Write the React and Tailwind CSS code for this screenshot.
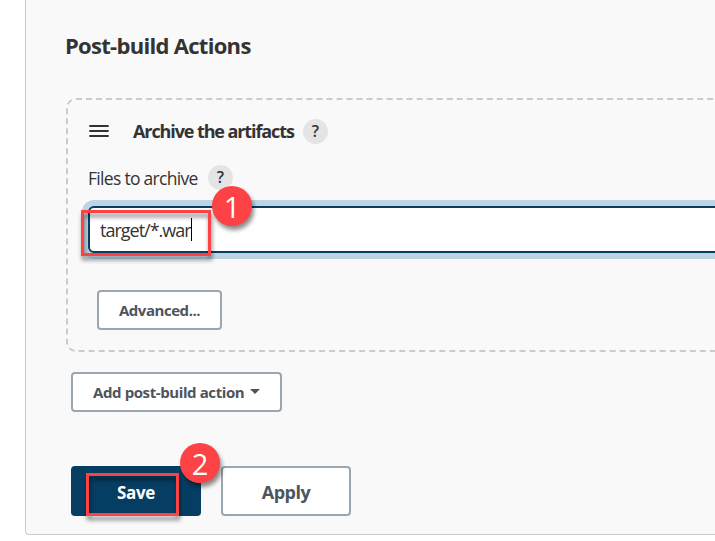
function Help({ className = "" }) {
  return (
    <span
      className={`flex h-[25px] w-[25px] shrink-0 items-center justify-center rounded-full bg-[#e4e4e4] text-[16px] font-semibold text-[#333] ${className}`}
    >
      ?
    </span>
  );
}

function Step({ n, className }) {
  return (
    <span
      className={`absolute flex h-10 w-10 items-center justify-center rounded-full bg-[#fd4245] font-['Open_Sans',sans-serif] text-[29px] leading-none font-normal tracking-normal text-white shadow-[2px_4px_4px_rgba(0,0,0,0.45)] ${className}`}
    >
      {n}
    </span>
  );
}

function Highlight({ className }) {
  return (
    <span
      className={`pointer-events-none absolute border-3 border-[#fd4245] [filter:drop-shadow(1px_4px_2px_rgba(0,0,0,0.5))] ${className}`}
    />
  );
}

export default function App() {
  return (
    <div className="h-[541px] w-full overflow-hidden bg-white pl-[25px] font-['Open_Sans','Noto_Sans',sans-serif] text-[#333]">
      <main className="flex h-[535px] w-[800px] flex-col items-start rounded-bl-[4px] border-b border-l border-[#c1cbd1] bg-[#f9f9f9] pl-10">
        <h2 className="mt-[30px] -ml-px h-[30px] text-[22px] leading-[30px] font-bold tracking-[-0.7px] whitespace-nowrap">
          Post-build Actions
        </h2>

        <section className="mt-[38px] h-[254px] w-[780px] rounded-[10px] border-2 border-dashed border-[#c3cdd2] pt-[18px] pl-5">
          <div className="flex h-[26px] items-center pl-px">
            <svg width="20" height="12" viewBox="0 0 20 12" className="shrink-0">
              <path
                d="M1 1h18M1 6h18M1 11h18"
                stroke="#333"
                strokeWidth="1.8"
                strokeLinecap="round"
              />
            </svg>
            <h3 className="ml-6 w-[170px] text-[18px] leading-[26px] font-bold tracking-[-1.1px] whitespace-nowrap">
              Archive the artifacts
            </h3>
            <Help />
          </div>

          <div className="mt-[20px] flex h-[26px] items-center">
            <label className="w-[120px] pt-0.5 text-[17.5px] leading-[26px] tracking-[-0.7px] whitespace-nowrap">
              Files to archive
            </label>
            <Help />
          </div>

          <div className="relative mt-[16px] flex h-[47px] w-[720px] items-center rounded-[6px] border-2 border-[#063e63] bg-white pl-[10px] shadow-[0_0_0_6px_#bdd4e2]">
            <span className="text-[18px] leading-6 tracking-[-1px]">target/*.war</span>
            <span className="h-[23px] w-px bg-black" />
            <Highlight className="top-[2px] left-[-9px] h-[46px] w-[130px]" />
            <Step n="1" className="top-[-22px] left-[122px]" />
          </div>

          <button className="mt-[37px] ml-[9px] flex h-10 w-[125px] items-center justify-center rounded-[4px] border-2 border-[#9aa6b1] bg-white text-[15px] font-bold tracking-[-0.45px] text-[#4d545d]">
            Advanced...
          </button>
        </section>

        <button className="mt-5 ml-[5px] flex h-10 w-[211px] items-center rounded-[4px] border-2 border-[#9aa6b1] bg-white pl-5 text-[15px] font-bold tracking-[-0.4px] whitespace-nowrap text-[#4d545d]">
          Add post-build action
          <svg width="10" height="5" viewBox="0 0 10 5" className="mb-0.5 ml-1.5 shrink-0">
            <path d="M0 0h10L5 5z" fill="#4d545d" />
          </svg>
        </button>

        <div className="mt-[54px] ml-[5px] flex gap-5">
          <button className="relative flex h-[50px] w-[130px] items-center justify-center rounded-[4px] bg-[#063e63] pt-1 text-[17px] font-bold tracking-[-0.3px] text-white">
            Save
            <Highlight className="top-[7px] left-[15px] h-[43px] w-[93px]" />
            <Step n="2" className="top-[-23px] left-[109px]" />
          </button>
          <button className="flex h-[50px] w-[130px] items-center justify-center rounded-[4px] border-2 border-[#9aa6b1] bg-white pt-[3px] text-[18px] font-bold tracking-[-0.5px] text-[#4d545d]">
            Apply
          </button>
        </div>
      </main>
    </div>
  );
}
